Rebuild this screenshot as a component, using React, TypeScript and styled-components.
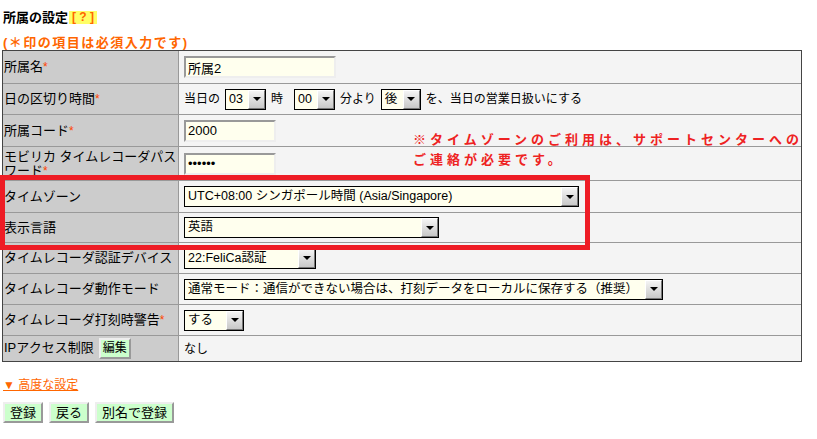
import styled, { createGlobalStyle } from "styled-components"

const GlobalStyle = createGlobalStyle`
	* { box-sizing: border-box; }
	body {
		margin: 0;
		background: #fff;
		color: #000;
		font-family: "Liberation Sans", "Noto Sans CJK JP", sans-serif;
		font-size: 13px;
	}
`

const Page = styled.div`
	position: relative;
	width: 817px;
	height: 439px;
	padding: 10px 0 0 3px;
`

const Title = styled.div`
	font-weight: bold;
	font-size: 13px;
	line-height: 15px;
	display: flex;
	align-items: center;
`

const Help = styled.span`
	background: #ffff66;
	color: #ff6600;
	font-weight: bold;
	font-size: 12px;
	line-height: 13px;
	padding: 0 3px;
	margin-left: 1px;
	white-space: pre;
`

const Required = styled.div`
	margin-top: 10px;
	color: #ff6600;
	font-weight: bold;
	font-size: 13px;
	line-height: 15px;
	letter-spacing: 1.5px;
`

const Table = styled.table`
	margin-left: -1px;
	width: 800px;
	table-layout: fixed;
	border-collapse: separate;
	border-spacing: 0;
	border: 1px solid #444;
	tr:last-child > * { border-bottom: none; }
`

const Row = styled.tr<{ $h: number }>`
	height: ${p => p.$h}px;
`

const Label = styled.th`
	width: 176px;
	background: #cccccc;
	text-align: left;
	font-weight: normal;
	font-size: 13px;
	line-height: 14px;
	padding: 0 1px;
	border-right: 1px solid #999;
	border-bottom: 1px solid #999;
	vertical-align: middle;
	white-space: nowrap;
`

const LabelLine = styled.span`
	display: block;
	white-space: nowrap;
`

const Value = styled.td`
	background: #f4f4f4;
	font-size: 12px;
	line-height: 14px;
	padding: 0 5px;
	border-bottom: 1px solid #999;
	vertical-align: middle;
`

const Req = styled.span`
	color: #ff4400;
	font-size: 12px;
`

const TextInput = styled.input<{ $w: number }>`
	width: ${p => p.$w}px;
	height: 22px;
	margin: 0;
	padding: 0 2px;
	border: 2px solid;
	border-color: #999 #eee #eee #999;
	background: #ffffee;
	font-family: "Liberation Sans", "Noto Sans CJK JP", sans-serif;
	font-size: 13px;
	color: #000;
	outline: none;
	display: block;
`

const Inline = styled.div`
	display: flex;
	align-items: center;
	gap: 5px;
	white-space: nowrap;
`

const Select = styled.span<{ $w: number }>`
	display: inline-flex;
	align-items: stretch;
	width: ${p => p.$w}px;
	height: 21px;
	border: 1px solid #000;
	background: #ffffee;
	flex: none;
	vertical-align: middle;
`

const SelectText = styled.span`
	flex: 1;
	padding: 0 3px;
	font-size: 12.5px;
	line-height: 19px;
	white-space: nowrap;
	overflow: hidden;
`

const SelectArrow = styled.span`
	width: 17px;
	flex: none;
	border: 1px solid;
	border-color: #fff #777 #777 #fff;
	background: linear-gradient(#f4f4f4, #c8c8c8);
	display: flex;
	align-items: center;
	justify-content: center;
	&::after {
		content: "";
		border-left: 4px solid transparent;
		border-right: 4px solid transparent;
		border-top: 4px solid #000;
	}
`

const Gap = styled.span<{ $w: number }>`
	width: ${p => p.$w}px;
	flex: none;
`

const SmallBtn = styled.button`
	background: #ccffcc;
	border: 2px solid;
	border-color: #eee #999 #999 #eee;
	font-family: "Liberation Sans", "Noto Sans CJK JP", sans-serif;
	font-size: 12px;
	line-height: 15px;
	height: 21px;
	padding: 0 2px;
	margin-left: 5px;
	color: #000;
	vertical-align: middle;
`

const Advanced = styled.a`
	display: inline-block;
	margin-top: 16px;
	color: #ff6600;
	text-decoration: underline;
	font-size: 12px;
	line-height: 14px;
`

const Buttons = styled.div`
	display: flex;
	gap: 6px;
	margin-top: 10px;
`

const Btn = styled.button`
	background: #ccffcc;
	border: 2px solid;
	border-color: #eee #999 #999 #eee;
	font-family: "Liberation Sans", "Noto Sans CJK JP", sans-serif;
	font-size: 13px;
	line-height: 15px;
	height: 21px;
	padding: 0 5px;
	color: #000;
`

const Note = styled.div`
	position: absolute;
	left: 413px;
	top: 130px;
	color: #ee2222;
	font-weight: bold;
	font-size: 13px;
	line-height: 20px;
	letter-spacing: 4px;
	white-space: nowrap;
`

const Frame = styled.div`
	position: absolute;
	left: 0;
	top: 175px;
	width: 590px;
	height: 75px;
	border: 5px solid #ee1c25;
	pointer-events: none;
`

function Dropdown({ w, value }: { w: number; value: string }) {
	return (
		<Select $w={w}>
			<SelectText>{value}</SelectText>
			<SelectArrow />
		</Select>
	)
}

export default function App() {
	return (
		<Page>
			<GlobalStyle />
			<Title>
				所属の設定<Help>[ ? ]</Help>
			</Title>
			<Required>(＊印の項目は必須入力です)</Required>
			<Table>
				<colgroup>
					<col style={{ width: 176 }} />
					<col />
				</colgroup>
				<tbody>
					<Row $h={33}>
						<Label>
							所属名<Req>*</Req>
						</Label>
						<Value>
							<TextInput $w={152} readOnly value="所属2" />
						</Value>
					</Row>
					<Row $h={31}>
						<Label>
							日の区切り時間<Req>*</Req>
						</Label>
						<Value>
							<Inline>
								当日の
								<Dropdown w={41} value="03" />
								時<Gap $w={1} />
								<Dropdown w={41} value="00" />
								分より
								<Dropdown w={40} value="後" />
								を、当日の営業日扱いにする
							</Inline>
						</Value>
					</Row>
					<Row $h={32}>
						<Label>
							所属コード<Req>*</Req>
						</Label>
						<Value>
							<TextInput $w={92} readOnly value="2000" />
						</Value>
					</Row>
					<Row $h={34}>
						<Label>
							<LabelLine>モビリカ タイムレコーダパス</LabelLine>
							<LabelLine>
								ワード<Req>*</Req>
							</LabelLine>
						</Label>
						<Value>
							<TextInput $w={92} type="password" readOnly value="abcdef" />
						</Value>
					</Row>
					<Row $h={32}>
						<Label>タイムゾーン</Label>
						<Value>
							<Dropdown w={395} value="UTC+08:00 シンガポール時間 (Asia/Singapore)" />
						</Value>
					</Row>
					<Row $h={30}>
						<Label>表示言語</Label>
						<Value>
							<Dropdown w={255} value="英語" />
						</Value>
					</Row>
					<Row $h={31}>
						<Label>タイムレコーダ認証デバイス</Label>
						<Value>
							<Dropdown w={132} value="22:FeliCa認証" />
						</Value>
					</Row>
					<Row $h={31}>
						<Label>タイムレコーダ動作モード</Label>
						<Value>
							<Dropdown
								w={479}
								value="通常モード：通信ができない場合は、打刻データをローカルに保存する（推奨）"
							/>
						</Value>
					</Row>
					<Row $h={31}>
						<Label>
							タイムレコーダ打刻時警告<Req>*</Req>
						</Label>
						<Value>
							<Dropdown w={60} value="する" />
						</Value>
					</Row>
					<Row $h={25}>
						<Label>
							IPアクセス制限<SmallBtn>編集</SmallBtn>
						</Label>
						<Value>なし</Value>
					</Row>
				</tbody>
			</Table>
			<Advanced href="#">▼ 高度な設定</Advanced>
			<Buttons>
				<Btn>登録</Btn>
				<Btn>戻る</Btn>
				<Btn>別名で登録</Btn>
			</Buttons>
			<Note>
				※タイムゾーンのご利用は、サポートセンターへの
				<br />
				ご連絡が必要です。
			</Note>
			<Frame />
		</Page>
	)
}
